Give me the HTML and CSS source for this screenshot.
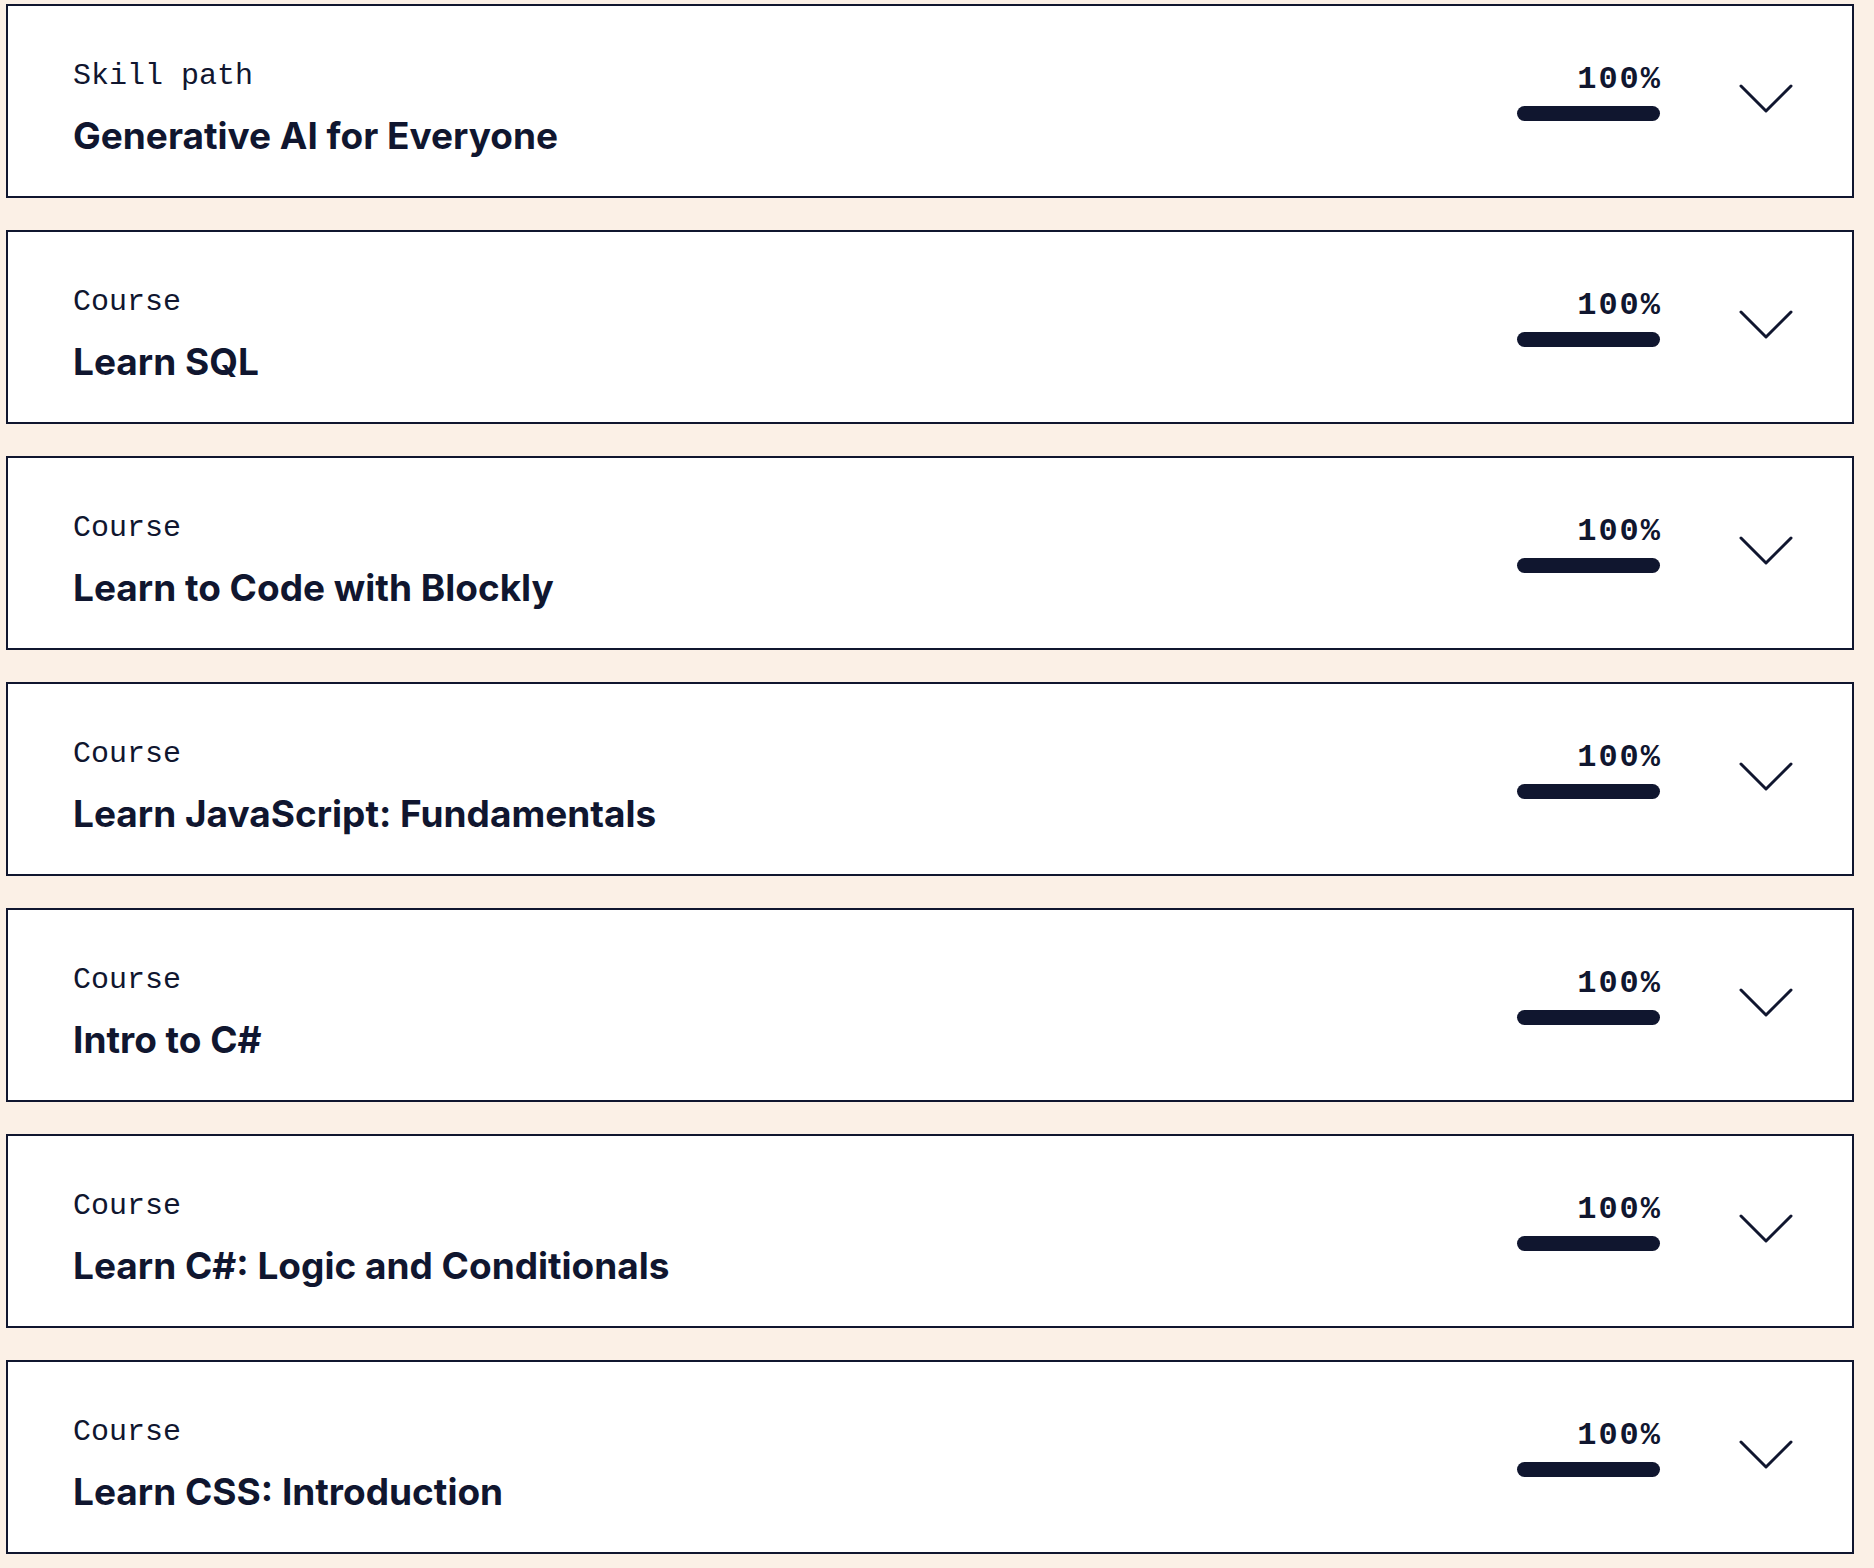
FILE: index.html
```html
<!DOCTYPE html>
<html lang="en">
<head>
    <meta charset="UTF-8">
    <meta name="viewport" content="width=device-width, initial-scale=1.0">
    <title>My learning</title>
    <link rel="stylesheet" href="styles.css">
</head>
<body>
    <div class="list">
        <div class="card">
            <div class="info">
                <p class="kind">Skill path</p>
                <h2 class="name">Generative AI for Everyone</h2>
            </div>
            <div class="side">
                <div class="progress">
                    <p class="percent">100%</p>
                    <div class="bar"></div>
                </div>
                <svg class="chevron" width="56" height="32" viewBox="0 0 56 32"><polyline points="3,3 28,28 53,3"/></svg>
            </div>
        </div>
        <div class="card">
            <div class="info">
                <p class="kind">Course</p>
                <h2 class="name">Learn SQL</h2>
            </div>
            <div class="side">
                <div class="progress">
                    <p class="percent">100%</p>
                    <div class="bar"></div>
                </div>
                <svg class="chevron" width="56" height="32" viewBox="0 0 56 32"><polyline points="3,3 28,28 53,3"/></svg>
            </div>
        </div>
        <div class="card">
            <div class="info">
                <p class="kind">Course</p>
                <h2 class="name">Learn to Code with Blockly</h2>
            </div>
            <div class="side">
                <div class="progress">
                    <p class="percent">100%</p>
                    <div class="bar"></div>
                </div>
                <svg class="chevron" width="56" height="32" viewBox="0 0 56 32"><polyline points="3,3 28,28 53,3"/></svg>
            </div>
        </div>
        <div class="card">
            <div class="info">
                <p class="kind">Course</p>
                <h2 class="name">Learn JavaScript: Fundamentals</h2>
            </div>
            <div class="side">
                <div class="progress">
                    <p class="percent">100%</p>
                    <div class="bar"></div>
                </div>
                <svg class="chevron" width="56" height="32" viewBox="0 0 56 32"><polyline points="3,3 28,28 53,3"/></svg>
            </div>
        </div>
        <div class="card">
            <div class="info">
                <p class="kind">Course</p>
                <h2 class="name">Intro to C#</h2>
            </div>
            <div class="side">
                <div class="progress">
                    <p class="percent">100%</p>
                    <div class="bar"></div>
                </div>
                <svg class="chevron" width="56" height="32" viewBox="0 0 56 32"><polyline points="3,3 28,28 53,3"/></svg>
            </div>
        </div>
        <div class="card">
            <div class="info">
                <p class="kind">Course</p>
                <h2 class="name">Learn C#: Logic and Conditionals</h2>
            </div>
            <div class="side">
                <div class="progress">
                    <p class="percent">100%</p>
                    <div class="bar"></div>
                </div>
                <svg class="chevron" width="56" height="32" viewBox="0 0 56 32"><polyline points="3,3 28,28 53,3"/></svg>
            </div>
        </div>
        <div class="card">
            <div class="info">
                <p class="kind">Course</p>
                <h2 class="name">Learn CSS: Introduction</h2>
            </div>
            <div class="side">
                <div class="progress">
                    <p class="percent">100%</p>
                    <div class="bar"></div>
                </div>
                <svg class="chevron" width="56" height="32" viewBox="0 0 56 32"><polyline points="3,3 28,28 53,3"/></svg>
            </div>
        </div>
    </div>
</body>
</html>
```

FILE: styles.css
```css
* {
    margin: 0;
    padding: 0;
    box-sizing: border-box;
}
body {
    background-color: #fbf0e6;
    color: #10162f;
}
.list {
    display: flex;
    flex-direction: column;
    gap: 32px;
    padding: 4px 20px 0 6px;
}
.card {
    display: flex;
    justify-content: space-between;
    align-items: flex-start;
    height: 194px;
    padding: 52px 58px 0 65px;
    background-color: #fff;
    border: solid 2px #10162f;
}
.kind {
    font-family: "Liberation Mono", "DejaVu Sans Mono", monospace;
    font-size: 30px;
    line-height: 36px;
}
.name {
    margin-top: 19px;
    font-family: Inter, "Noto Sans", sans-serif;
    font-size: 37px;
    font-weight: 700;
    line-height: 45px;
}
.side {
    display: flex;
    align-items: flex-start;
    gap: 78px;
}
.progress {
    display: flex;
    flex-direction: column;
    align-items: flex-end;
    margin-top: 7px;
}
.percent {
    font-family: "Liberation Mono", "DejaVu Sans Mono", monospace;
    font-size: 32px;
    font-weight: 700;
    line-height: 30px;
    letter-spacing: 2px;
    margin-right: -2px;
}
.bar {
    width: 143px;
    height: 15px;
    margin-top: 11px;
    border-radius: 8px;
    background-color: #10162f;
}
.chevron {
    margin-top: 25px;
}
.chevron polyline {
    fill: none;
    stroke: #10162f;
    stroke-width: 3;
    stroke-linecap: round;
    stroke-linejoin: round;
}
```
